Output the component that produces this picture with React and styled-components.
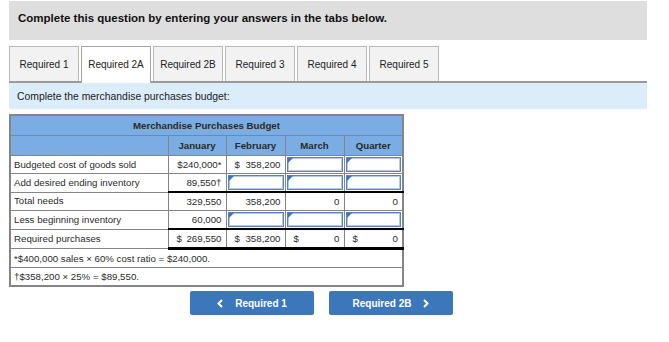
import React from 'react';
import styled, {createGlobalStyle, css} from "styled-components";

const GlobalStyle = createGlobalStyle`
  body {
    margin: 0;
    background: #fff;
    font-family: "Liberation Sans", Arial, sans-serif;
    color: #222;
  }
`;

const tabs = ['Required 1', 'Required 2A', 'Required 2B', 'Required 3', 'Required 4', 'Required 5'];

const rows = [
    {label: 'Budgeted cost of goods sold', cells: [{text: '$240,000*'}, {dollar: '358,200'}, {input: true}, {input: true}]},
    {label: 'Add desired ending inventory', cells: [{text: '89,550†'}, {input: true}, {input: true}, {input: true}]},
    {label: 'Total needs', topRule: true, cells: [{text: '329,550'}, {text: '358,200'}, {text: '0'}, {text: '0'}]},
    {label: 'Less beginning inventory', cells: [{text: '60,000'}, {input: true}, {input: true}, {input: true}]},
    {label: 'Required purchases', topRule: true, bottomRule: true, cells: [{dollar: '269,550'}, {dollar: '358,200'}, {dollar: '0'}, {dollar: '0'}]},
];

const Chevron = ({dir}) => (
    <svg width="6" height="9" viewBox="0 0 6 9">
        <polyline
            points={dir === 'left' ? '5,1 1.5,4.5 5,8' : '1,1 4.5,4.5 1,8'}
            fill="none" stroke="#fff" strokeWidth="2"/>
    </svg>
);

const App = () => {
    return (
        <Page>
            <GlobalStyle/>

            <Banner>Complete this question by entering your answers in the tabs below.</Banner>

            <TabBar>
                {tabs.map(t => (
                    <Tab key={t} $active={t === 'Required 2A'}>{t}</Tab>
                ))}
            </TabBar>

            <Instructions>Complete the merchandise purchases budget:</Instructions>

            <Budget>
                <colgroup>
                    <col style={{width: 158}}/>
                    <col style={{width: 58}}/>
                    <col style={{width: 59}}/>
                    <col style={{width: 59}}/>
                    <col style={{width: 59}}/>
                </colgroup>
                <thead>
                <tr>
                    <TitleCell colSpan={5}>Merchandise Purchases Budget</TitleCell>
                </tr>
                <tr>
                    <HeadCell/>
                    <HeadCell>January</HeadCell>
                    <HeadCell>February</HeadCell>
                    <HeadCell>March</HeadCell>
                    <HeadCell>Quarter</HeadCell>
                </tr>
                </thead>
                <tbody>
                {rows.map(r => (
                    <tr key={r.label}>
                        <LabelCell>{r.label}</LabelCell>
                        {r.cells.map((c, i) => (
                            <ValueCell key={i} $top={r.topRule} $bottom={r.bottomRule}>
                                {c.input && <InputBox/>}
                                {c.text}
                                {c.dollar && (
                                    <Dollar><span>$</span><span>{c.dollar}</span></Dollar>
                                )}
                            </ValueCell>
                        ))}
                    </tr>
                ))}
                <tr>
                    <NoteCell colSpan={5}>*$400,000 sales × 60% cost ratio = $240,000.</NoteCell>
                </tr>
                <tr>
                    <NoteCell colSpan={5}>†$358,200 × 25% = $89,550.</NoteCell>
                </tr>
                </tbody>
            </Budget>

            <ButtonRow>
                <NavButton><Chevron dir="left"/>Required 1</NavButton>
                <NavButton>Required 2B<Chevron dir="right"/></NavButton>
            </ButtonRow>
        </Page>
    );
};

const Page = styled.div`
  width: 638px;
  padding: 1px 0 0 9px;
`;

const Banner = styled.div`
  height: 39px;
  box-sizing: border-box;
  background: #dedede;
  padding: 10px 0 0 9px;
  font-size: 11.5px;
  font-weight: bold;
  line-height: 14px;
  color: #111;
`;

const TabBar = styled.div`
  display: flex;
  gap: 2px;
  margin-top: 6px;
  border-bottom: 2px solid #9a9a9a;
`;

const Tab = styled.div`
  width: 70px;
  height: 35px;
  box-sizing: border-box;
  display: flex;
  align-items: center;
  justify-content: center;
  border: 1px solid #b9b9b9;
  border-bottom: none;
  background: #f2f2f2;
  font-size: 10px;
  color: #222;

  ${p => p.$active && css`
    background: #fff;
    border-color: #a5a5a5;
    height: 37px;
    padding-bottom: 2px;
    margin-bottom: -2px;
  `}
`;

const Instructions = styled.div`
  height: 26px;
  box-sizing: border-box;
  background: #dbedfa;
  padding: 8px 0 0 8px;
  font-size: 10.4px;
  line-height: 12px;
  color: #222;
`;

const Budget = styled.table`
  margin-top: 5px;
  width: 393px;
  border-collapse: collapse;
  border: 2px solid #858585;
  table-layout: fixed;
  font-size: 9.7px;
  line-height: 12px;
  color: #2c2c2c;

  td, th {
    border: 1px solid #858585;
    padding: 0;
  }
`;

const TitleCell = styled.th`
  height: 19px;
  background: #79ade3;
  font-weight: bold;
  text-align: center;
  color: #2a2a2a;
`;

const HeadCell = styled.th`
  height: 19px;
  background: #79ade3;
  font-weight: bold;
  text-align: center;
  color: #2a2a2a;
`;

const LabelCell = styled.td`
  height: 17px;
  padding: 0 3px !important;
  white-space: nowrap;
`;

const ValueCell = styled.td`
  position: relative;
  height: 17px;
  text-align: right;
  white-space: nowrap;
  padding: 0 4px 0 0 !important;
  ${p => p.$top && css`border-top: 2px solid #000 !important;`}
  ${p => p.$bottom && css`border-bottom: 3px solid #000 !important;`}
`;

const InputBox = styled.div`
  position: absolute;
  inset: 1px;
  border: 1px solid #5583c0;
  box-shadow: inset 0 0 0 1px #b4c9e4;

  &::before {
    content: "";
    position: absolute;
    top: 0;
    left: 0;
    border-top: 5px solid #3a75c4;
    border-right: 5px solid transparent;
  }
`;

const Dollar = styled.div`
  display: flex;
  justify-content: space-between;
  padding-left: 8px;
`;

const NoteCell = styled.td`
  height: 17px;
  padding: 0 3px !important;
`;

const ButtonRow = styled.div`
  width: 625px;
  display: flex;
  justify-content: center;
  gap: 15px;
  margin-top: 4px;
`;

const NavButton = styled.div`
  width: 124px;
  height: 24px;
  display: flex;
  align-items: center;
  justify-content: center;
  gap: 12px;
  background: #3c77bb;
  border-radius: 2px;
  color: #fff;
  font-size: 10px;
  font-weight: bold;
`;

export default App;
